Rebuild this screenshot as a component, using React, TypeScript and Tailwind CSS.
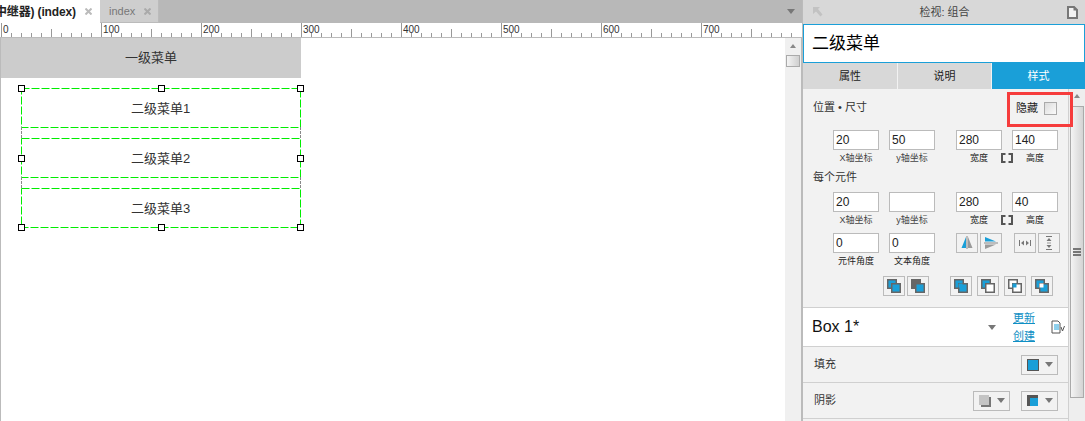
const BLUE = '#1a9fd8';

function Handle({ x, y }: { x: number; y: number }) {
  return (
    <div
      className="absolute h-[7px] w-[7px] border border-black bg-white"
      style={{ left: x, top: y }}
    />
  );
}

function MenuItem({ label, top }: { label: string; top: number }) {
  return (
    <div
      className="absolute left-[20px] flex h-[40px] w-[280px] items-center justify-center pt-[1px] pr-[1px] text-[13px] text-[#333]"
      style={{ top }}
    >
      {label}
      <svg className="absolute inset-0" width="280" height="40">
        <rect x="0.5" y="0.5" width="279" height="39" fill="none" stroke="#00ee00" strokeDasharray="8 2" />
      </svg>
    </div>
  );
}

function CloseIcon({ color }: { color: string }) {
  return (
    <svg className="shrink-0" width="7" height="7" viewBox="0 0 7 7">
      <path d="M0.5 0.5l6 6M6.5 0.5l-6 6" stroke={color} strokeWidth="2" />
    </svg>
  );
}

function Ruler() {
  const ticks = Array.from({ length: 80 }, (_, i) => i);
  return (
    <div className="flex h-[15px] overflow-hidden border-b border-[#bbb] bg-white pl-[1px]">
      {ticks.map((i) => (
        <div key={i} className="relative flex h-full w-[10px] shrink-0 items-end">
          {i % 10 === 0 ? (
            <>
              <div className="h-full w-px bg-[#999]" />
              <span className="absolute left-[2px] top-[1px] text-[10px] leading-[11px] text-[#333]">{i * 10}</span>
            </>
          ) : (
            <div className={i % 5 === 0 ? 'h-[8px] w-px bg-[#999]' : 'h-[4px] w-px bg-[#999]'} />
          )}
        </div>
      ))}
    </div>
  );
}

function Field({ value, label, bold }: { value: string; label: string; bold?: boolean }) {
  return (
    <div className="flex w-[46px] shrink-0 flex-col items-center">
      <div className="h-[20px] w-[46px] border border-[#bbb] bg-white pl-[2px] text-[12px] leading-[18px] text-[#222]">{value}</div>
      <div className={bold ? 'mt-[2px] text-[9px] leading-[13px] text-[#222]' : 'mt-[2px] text-[9px] leading-[13px] text-[#444]'}>{label}</div>
    </div>
  );
}

function Brackets() {
  return (
    <svg className="mt-[23px] mr-[-1px] ml-[-1px] shrink-0" width="12" height="10" viewBox="0 0 12 10">
      <path d="M4.5 1H1V9h3.5M7.5 1H11V9H7.5" fill="none" stroke="#555" strokeWidth="2" />
    </svg>
  );
}

function IconButton({ children }: { children: React.ReactNode }) {
  return (
    <div className="flex h-[20px] w-[22px] items-center justify-center border border-[#bbb] bg-[#f2f2f2]">
      <svg width="16" height="16" viewBox="0 0 16 16">{children}</svg>
    </div>
  );
}

function Caret() {
  return <div className="h-0 w-0 border-x-[4px] border-t-[5px] border-x-transparent border-t-[#777]" />;
}

function Layers({ backFill, frontFill, overlap }: { backFill: string; frontFill: string; overlap?: string }) {
  return (
    <IconButton>
      <rect x="1.75" y="1.75" width="8.5" height="8.5" fill={backFill} stroke="#666" strokeWidth="1.5" />
      <rect x="5.75" y="5.75" width="8.5" height="8.5" fill={frontFill} stroke="#666" strokeWidth="1.5" />
      {overlap && <rect x="5.5" y="5.5" width="4" height="4" fill={overlap} />}
    </IconButton>
  );
}

function ColorButton({ children }: { children: React.ReactNode }) {
  return (
    <div className="flex h-[20px] w-[37px] items-center justify-between border border-[#bbb] pl-[5px] pr-[4px]">
      {children}
      <Caret />
    </div>
  );
}

export default function App() {
  return (
    <div className="relative flex h-[421px] w-[1085px] overflow-hidden bg-white font-['Liberation_Sans','Noto_Sans_CJK_SC',sans-serif]">
      {/* Editor */}
      <div className="flex w-[802px] shrink-0 flex-col">
        <div className="flex h-[23px] items-stretch bg-[#b8b8b8]">
          <div className="flex w-[100px] items-center justify-between overflow-hidden bg-white pr-[8px] text-[12px] font-bold tracking-[-0.15px] text-[#222]">
            <span className="ml-[-5px] whitespace-nowrap">中继器) (index)</span>
            <CloseIcon color="#bbb" />
          </div>
          <div className="flex w-[59px] items-center justify-between border-r border-b border-[#bbb] bg-[#cecece] pl-[9px] pr-[7px] text-[11px] text-[#777]">
            <span>index</span>
            <CloseIcon color="#aaa" />
          </div>
          <div className="ml-auto mr-[7px] flex items-center"><Caret /></div>
        </div>
        <Ruler />
        <div className="flex flex-1">
          {/* Canvas */}
          <div className="relative flex-1 border-l border-[#bbb]">
            <div className="flex h-[40px] w-[300px] items-center justify-center bg-[#cccccc] text-[13px] text-[#333]">一级菜单</div>
            <MenuItem label="二级菜单1" top={50} />
            <MenuItem label="二级菜单2" top={100} />
            <MenuItem label="二级菜单3" top={150} />
            <div className="absolute left-[20px] top-[89px] h-[11px] w-[280px] border-x border-dashed border-[#888]" />
            <div className="absolute left-[20px] top-[139px] h-[11px] w-[280px] border-x border-dashed border-[#888]" />
            <Handle x={17} y={47} />
            <Handle x={157} y={47} />
            <Handle x={296} y={47} />
            <Handle x={17} y={117} />
            <Handle x={296} y={117} />
            <Handle x={17} y={186} />
            <Handle x={157} y={186} />
            <Handle x={296} y={186} />
          </div>
          {/* Canvas scrollbar */}
          <div className="flex w-[17px] shrink-0 flex-col items-center border-r border-[#bbb] bg-[#f0f0f0] pr-[1px]">
            <div className="mt-[6px] h-0 w-0 border-x-[3px] border-b-[4px] border-x-transparent border-b-[#888]" />
            <div className="mt-[7px] h-[12px] w-[14px] border border-[#aaa] bg-gradient-to-r from-[#f4f4f4] to-[#cfcfcf]" />
          </div>
        </div>
      </div>

      {/* Inspector */}
      <div className="flex w-[283px] shrink-0 flex-col border-l border-[#bbb] bg-[#f2f2f2]">
        <div className="flex h-[24px] shrink-0 items-center justify-between bg-[#d8d8d8] pl-[9px] pr-[7px]">
          <svg width="12" height="12" viewBox="0 0 12 12">
            <path d="M1 1h7L6 3l4.5 5.5L8.5 10.5 4 5.5 1 8z" fill="#c2c2c2" />
          </svg>
          <span className="mr-[2px] text-[11px] text-[#444]">检视: 组合</span>
          <svg width="11" height="13" viewBox="0 0 11 13">
            <path d="M1 1h6l3 3v8H1z" fill="#f2f2f2" stroke="#777" strokeWidth="2" />
            <path d="M6.5 0v4.5H11" fill="#777" />
          </svg>
        </div>
        <div className="flex h-[39px] shrink-0 items-center border border-[#1a9fd8] bg-white pl-[8px] text-[17px] text-black">二级菜单</div>
        <div className="flex h-[26px] shrink-0 bg-[#d8d8d8] text-[11px] text-[#222]">
          <div className="flex w-[95px] items-center justify-center border-r border-[#f2f2f2]">属性</div>
          <div className="flex w-[94px] items-center justify-center border-r border-[#f2f2f2]">说明</div>
          <div className="flex flex-1 items-center justify-center bg-[#1a9fd8] text-white">样式</div>
        </div>

        <div className="flex min-h-0 flex-1">
          <div className="flex w-[265px] shrink-0 flex-col">
            {/* Position and size */}
            <div className="h-[219px] shrink-0 border-b border-[#d0d0d0]">
              <div className="flex items-start justify-between pl-[10px] pr-[11px] pt-[11px]">
                <span className="text-[11px] leading-[14px] text-[#333]">位置 • 尺寸</span>
                <div className="mt-[1px] flex items-center gap-[6px]">
                  <span className="text-[11px] leading-[14px] text-[#222]">隐藏</span>
                  <div className="h-[13px] w-[13px] border border-[#aaa] bg-gradient-to-br from-[#dcdcdc] to-[#fafafa]" />
                </div>
              </div>
              <div className="mt-[15px] flex gap-[10px] pl-[30px]">
                <Field value="20" label="X轴坐标" />
                <Field value="50" label="y轴坐标" />
                <div className="ml-[11px] flex">
                  <Field value="280" label="宽度" bold />
                  <Brackets />
                  <Field value="140" label="高度" bold />
                </div>
              </div>
              <div className="mt-[5px] pl-[10px] text-[11px] leading-[14px] text-[#333]">每个元件</div>
              <div className="mt-[8px] flex gap-[10px] pl-[30px]">
                <Field value="20" label="X轴坐标" />
                <Field value="" label="y轴坐标" />
                <div className="ml-[11px] flex">
                  <Field value="280" label="宽度" bold />
                  <Brackets />
                  <Field value="40" label="高度" bold />
                </div>
              </div>
              <div className="mt-[6px] flex gap-[10px] pl-[30px]">
                <Field value="0" label="元件角度" bold />
                <Field value="0" label="文本角度" bold />
                <div className="ml-[11px] flex gap-[2px]">
                  <IconButton>
                    <path d="M7 2v11H2.5z" fill={BLUE} />
                    <path d="M9 2v11h4.5z" fill="#9a9a9a" />
                    <path d="M8 1v13" stroke="#888" />
                  </IconButton>
                  <IconButton>
                    <path d="M2 2l11 4.5H2z" fill={BLUE} />
                    <path d="M1 8h14" stroke="#888" />
                    <path d="M2 9.5h11L2 14z" fill="#9a9a9a" />
                  </IconButton>
                  <div className="w-[8px]" />
                  <IconButton>
                    <path d="M2.5 5v6M13.5 5v6" stroke="#777" />
                    <path d="M4 8l3-2.5v5zM12 8L9 5.5v5z" fill="#777" />
                  </IconButton>
                  <IconButton>
                    <path d="M5 1.5h6M5 14.5h6" stroke="#777" />
                    <path d="M8 3l2.5 3h-5zM8 13l2.5-3h-5z" fill="#777" />
                    <path d="M6 8h4" stroke="#999" />
                  </IconButton>
                </div>
              </div>
              <div className="mt-[8px] flex pl-[80px]">
                <div className="flex gap-[2px]">
                  <Layers backFill={BLUE} frontFill={BLUE} />
                  <Layers backFill="#666" frontFill={BLUE} />
                </div>
                <div className="ml-[21px] flex gap-[5px]">
                  <Layers backFill={BLUE} frontFill={BLUE} overlap={BLUE} />
                  <Layers backFill={BLUE} frontFill="#fff" />
                  <Layers backFill="#fff" frontFill="#fff" overlap={BLUE} />
                  <Layers backFill={BLUE} frontFill={BLUE} overlap="#fff" />
                </div>
              </div>
            </div>

            {/* Style row */}
            <div className="flex h-[39px] shrink-0 items-center border-b border-[#d0d0d0] bg-white pl-[9px] pr-[3px]">
              <span className="text-[16px] text-[#111]">Box 1*</span>
              <div className="ml-auto mr-[17px]"><Caret /></div>
              <div className="mr-[16px] flex flex-col text-[11px] leading-[18px] text-[#0f8fc4] underline">
                <span>更新</span>
                <span>创建</span>
              </div>
              <svg width="14" height="14" viewBox="0 0 14 14">
                <path d="M1 1h6l2 2v10H1z" fill="#fff" stroke="#555" />
                <path d="M3 5h5M3 7h5M3 9h5" stroke={BLUE} />
                <path d="M10 7l1.5 4L13.5 6" fill="none" stroke="#555" />
              </svg>
            </div>
            <div className="flex h-[36px] shrink-0 items-center justify-between border-b border-[#d0d0d0] pl-[11px] pr-[10px] text-[11px] text-[#333]">
              <span>填充</span>
              <ColorButton><div className="h-[12px] w-[12px] border border-[#555] bg-[#1a9fd8]" /></ColorButton>
            </div>
            <div className="flex h-[36px] shrink-0 items-center justify-between border-b border-[#d0d0d0] pl-[11px] pr-[10px] text-[11px] text-[#333]">
              <span>阴影</span>
              <div className="flex gap-[11px]">
                <ColorButton>
                  <svg width="12" height="12" viewBox="0 0 12 12">
                    <rect x="2" y="2" width="10" height="10" fill="#777" />
                    <rect x="0" y="0" width="10" height="10" fill="#c4c4c4" />
                  </svg>
                </ColorButton>
                <ColorButton>
                  <svg width="12" height="12" viewBox="0 0 12 12">
                    <rect x="0" y="0" width="11" height="11" fill="#555" />
                    <rect x="3" y="3" width="8" height="8" fill={BLUE} />
                  </svg>
                </ColorButton>
              </div>
            </div>
          </div>

          {/* Inspector scrollbar */}
          <div className="flex flex-1 flex-col items-center border-l border-[#d0d0d0] bg-[#eeeeee]">
            <div className="mt-[5px] h-0 w-0 border-x-[3px] border-b-[4px] border-x-transparent border-b-[#888]" />
            <div className="mt-[8px] flex h-[292px] w-[14px] flex-col items-center justify-center gap-[1px] border border-[#aaa] bg-gradient-to-r from-[#f4f4f4] to-[#d4d4d4]">
              <div className="h-[2px] w-[8px] bg-[#777]" />
              <div className="h-[2px] w-[8px] bg-[#777]" />
              <div className="h-[2px] w-[8px] bg-[#777]" />
            </div>
          </div>
        </div>
      </div>

      {/* Annotation */}
      <div className="pointer-events-none absolute left-[1007px] top-[92px] h-[35px] w-[66px] border-[3px] border-[#f63c3c]" />
    </div>
  );
}
